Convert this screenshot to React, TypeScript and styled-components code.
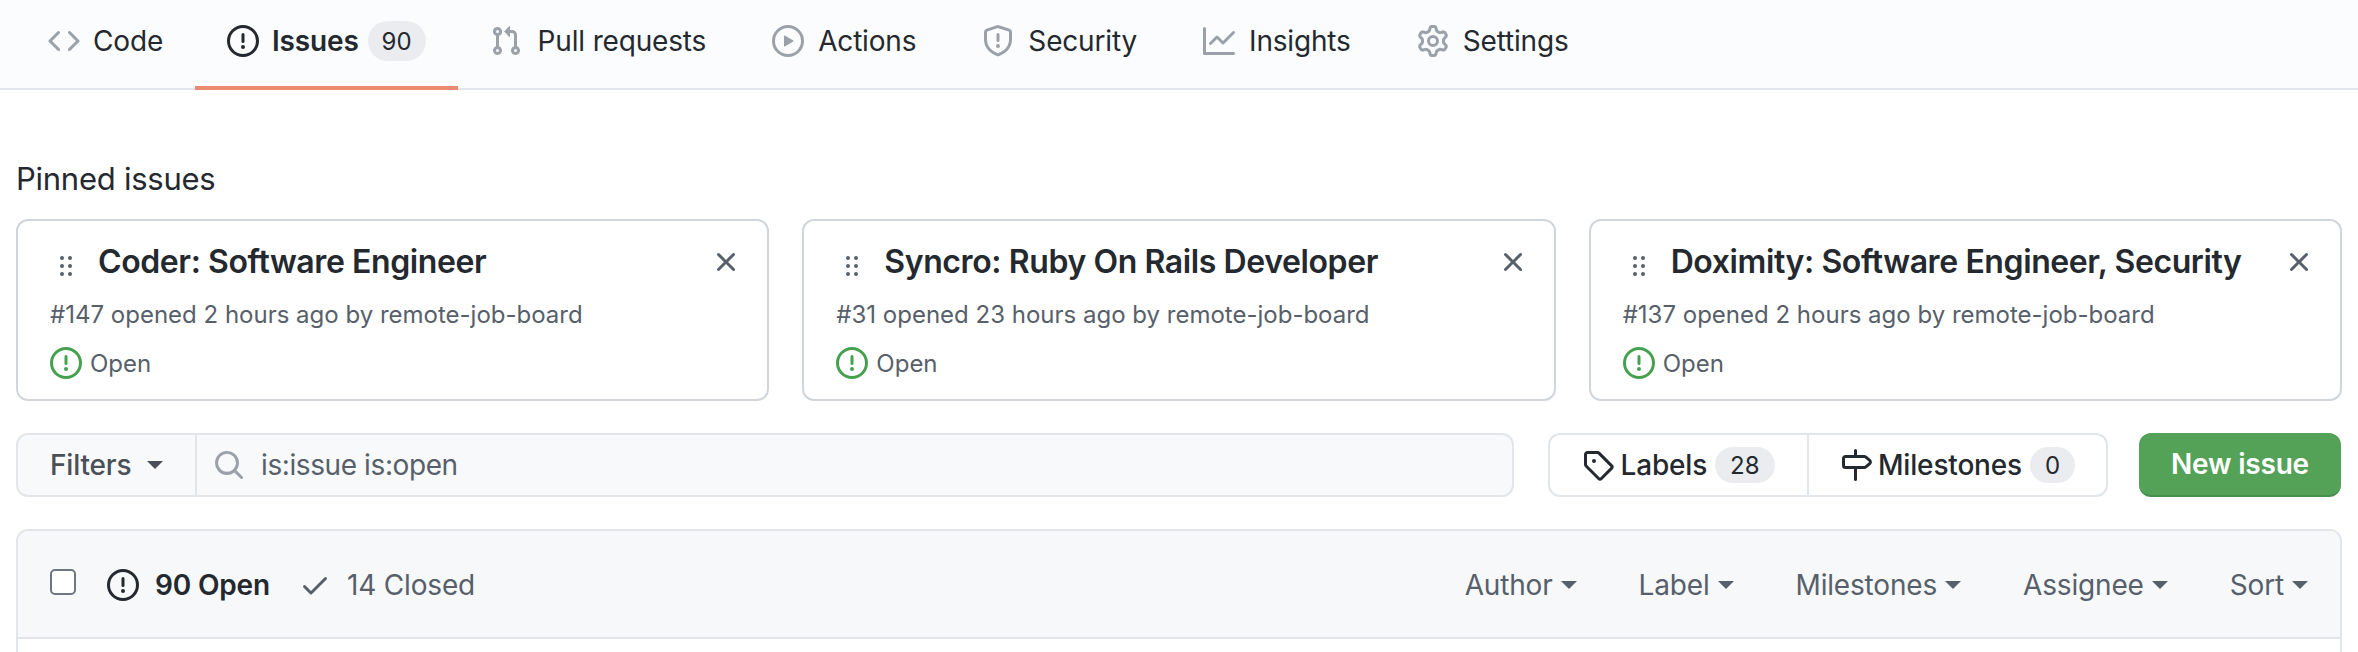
import styled, { createGlobalStyle } from "styled-components";

const GlobalStyle = createGlobalStyle`
  html, body {
    margin: 0;
    background: #ffffff;
    color: #24292f;
    font-family: Inter, "Liberation Sans", sans-serif;
    font-size: 28px;
    letter-spacing: -0.17px;
    overflow: hidden;
  }
  * { box-sizing: border-box; }
`;

const paths = {
  code: "m11.28 3.22 4.25 4.25a.75.75 0 0 1 0 1.06l-4.25 4.25a.749.749 0 0 1-1.275-.326.749.749 0 0 1 .215-.734L13.94 8l-3.72-3.72a.749.749 0 0 1 .326-1.275.749.749 0 0 1 .734.215Zm-6.56 0a.751.751 0 0 1 1.042.018.751.751 0 0 1 .018 1.042L2.06 8l3.72 3.72a.749.749 0 0 1-.326 1.275.749.749 0 0 1-.734-.215L.47 8.53a.75.75 0 0 1 0-1.06Z",
  issue: "M8 1.5a6.5 6.5 0 100 13 6.5 6.5 0 000-13zM0 8a8 8 0 1116 0A8 8 0 010 8zm9 3a1 1 0 11-2 0 1 1 0 012 0zm-.25-6.25a.75.75 0 00-1.5 0v3.5a.75.75 0 001.5 0v-3.5z",
  pull: "M1.5 3.25a2.25 2.25 0 1 1 3 2.122v5.256a2.251 2.251 0 1 1-1.5 0V5.372A2.25 2.25 0 0 1 1.5 3.25Zm5.677-.177L9.573.677A.25.25 0 0 1 10 .854V2.5h1A2.5 2.5 0 0 1 13.5 5v5.628a2.251 2.251 0 1 1-1.5 0V5a1 1 0 0 0-1-1h-1v1.646a.25.25 0 0 1-.427.177L7.177 3.427a.25.25 0 0 1 0-.354ZM3.75 2.5a.75.75 0 1 0 0 1.5.75.75 0 0 0 0-1.5Zm0 9.5a.75.75 0 1 0 0 1.5.75.75 0 0 0 0-1.5Zm8.25.75a.75.75 0 1 0 1.5 0 .75.75 0 0 0-1.5 0Z",
  play: "M8 0a8 8 0 1 1 0 16A8 8 0 0 1 8 0ZM1.5 8a6.5 6.5 0 1 0 13 0 6.5 6.5 0 0 0-13 0Zm4.879-2.773 4.264 2.559a.25.25 0 0 1 0 .428l-4.264 2.559A.25.25 0 0 1 6 10.559V5.442a.25.25 0 0 1 .379-.215Z",
  shield: "M7.467.133a1.748 1.748 0 0 1 1.066 0l5.25 1.68A1.75 1.75 0 0 1 15 3.48V7c0 1.566-.32 3.182-1.303 4.682-.983 1.498-2.585 2.813-5.032 3.855a1.697 1.697 0 0 1-1.33 0c-2.447-1.042-4.049-2.357-5.032-3.855C1.32 10.182 1 8.566 1 7V3.48a1.75 1.75 0 0 1 1.217-1.667Zm.61 1.429a.25.25 0 0 0-.153 0l-5.25 1.68a.25.25 0 0 0-.174.238V7c0 1.358.275 2.666 1.057 3.86.784 1.194 2.121 2.34 4.366 3.297a.196.196 0 0 0 .154 0c2.245-.956 3.582-2.104 4.366-3.298C13.225 9.666 13.5 8.36 13.5 7V3.48a.251.251 0 0 0-.174-.237l-5.25-1.68ZM8.75 4.75v3a.75.75 0 0 1-1.5 0v-3a.75.75 0 0 1 1.5 0ZM9 10.5a1 1 0 1 1-2 0 1 1 0 0 1 2 0Z",
  graph: "M1.5 1.75V13.5h13.75a.75.75 0 0 1 0 1.5H.75a.75.75 0 0 1-.75-.75V1.75a.75.75 0 0 1 1.5 0Zm14.28 2.53-5.25 5.25a.75.75 0 0 1-1.06 0L7 7.06 4.28 9.78a.751.751 0 0 1-1.042-.018.751.751 0 0 1-.018-1.042l3.25-3.25a.75.75 0 0 1 1.06 0L10 7.94l4.72-4.72a.751.751 0 0 1 1.042.018.751.751 0 0 1 .018 1.042Z",
  gear: "M8 0a8.2 8.2 0 0 1 .701.031C9.444.095 9.99.645 10.16 1.29l.288 1.107c.018.066.079.158.212.224.231.114.454.243.668.386.123.082.233.09.299.071l1.103-.303c.644-.176 1.392.021 1.82.63.27.385.506.792.704 1.218.315.675.111 1.422-.364 1.891l-.814.806c-.049.048-.098.147-.088.294.016.257.016.515 0 .772-.01.147.038.246.088.294l.814.806c.475.469.679 1.216.364 1.891a7.977 7.977 0 0 1-.704 1.217c-.428.61-1.176.807-1.82.63l-1.102-.302c-.067-.019-.177-.011-.3.071a5.909 5.909 0 0 1-.668.386c-.133.066-.194.158-.211.224l-.29 1.106c-.168.646-.715 1.196-1.458 1.26a8.006 8.006 0 0 1-1.402 0c-.743-.064-1.289-.614-1.458-1.26l-.289-1.106c-.018-.066-.079-.158-.212-.224a5.738 5.738 0 0 1-.668-.386c-.123-.082-.233-.09-.299-.071l-1.103.303c-.644.176-1.392-.021-1.82-.63a8.12 8.12 0 0 1-.704-1.218c-.315-.675-.111-1.422.363-1.891l.815-.806c.05-.048.098-.147.088-.294a6.214 6.214 0 0 1 0-.772c.01-.147-.038-.246-.088-.294l-.815-.806C.635 6.045.431 5.298.746 4.623a7.92 7.92 0 0 1 .704-1.217c.428-.61 1.176-.807 1.82-.63l1.102.302c.067.019.177.011.3-.071.214-.143.437-.272.668-.386.133-.066.194-.158.211-.224l.29-1.106C6.009.645 6.556.095 7.299.03 7.53.01 7.764 0 8 0Zm-.571 1.525c-.036.003-.108.036-.137.146l-.289 1.105c-.147.561-.549.967-.998 1.189-.173.086-.34.183-.5.29-.417.278-.97.423-1.529.27l-1.103-.303c-.109-.03-.175.016-.195.045-.22.312-.412.644-.573.99-.014.031-.021.11.059.19l.815.806c.411.406.562.957.53 1.456a4.709 4.709 0 0 0 0 .582c.032.499-.119 1.05-.53 1.456l-.815.806c-.081.08-.073.159-.059.19.162.346.353.677.573.989.02.03.085.076.195.046l1.102-.303c.56-.153 1.113-.008 1.53.27.161.107.328.204.501.29.447.222.85.629.997 1.189l.289 1.105c.029.109.101.143.137.146a6.6 6.6 0 0 0 1.142 0c.036-.003.108-.036.137-.146l.289-1.105c.147-.561.549-.967.998-1.189.173-.086.34-.183.5-.29.417-.278.97-.423 1.529-.27l1.103.303c.109.029.175-.016.195-.045.22-.313.411-.644.573-.99.014-.031.021-.11-.059-.19l-.815-.806c-.411-.406-.562-.957-.53-1.456a4.709 4.709 0 0 0 0-.582c-.032-.499.119-1.05.53-1.456l.815-.806c.081-.08.073-.159.059-.19a6.464 6.464 0 0 0-.573-.989c-.02-.03-.085-.076-.195-.046l-1.102.303c-.56.153-1.113.008-1.53-.27a4.44 4.44 0 0 0-.501-.29c-.447-.222-.85-.629-.997-1.189l-.289-1.105c-.029-.11-.101-.143-.137-.146a6.6 6.6 0 0 0-1.142 0ZM11 8a3 3 0 1 1-6 0 3 3 0 0 1 6 0ZM9.5 8a1.5 1.5 0 1 0-3.001.001A1.5 1.5 0 0 0 9.5 8Z",
  tag: "M1 7.775V2.75C1 1.784 1.784 1 2.75 1h5.025c.464 0 .91.184 1.238.513l6.25 6.25a1.75 1.75 0 0 1 0 2.474l-5.026 5.026a1.75 1.75 0 0 1-2.474 0l-6.25-6.25A1.752 1.752 0 0 1 1 7.775Zm1.5 0c0 .066.026.13.073.177l6.25 6.25a.25.25 0 0 0 .354 0l5.025-5.025a.25.25 0 0 0 0-.354l-6.25-6.25a.25.25 0 0 0-.177-.073H2.75a.25.25 0 0 0-.25.25ZM6 5a1 1 0 1 1 0 2 1 1 0 0 1 0-2Z",
  milestone: "M7.75 0a.75.75 0 0 1 .75.75V3h3.634c.414 0 .814.147 1.13.414l2.07 1.75a1.75 1.75 0 0 1 0 2.672l-2.07 1.75a1.75 1.75 0 0 1-1.13.414H8.5v5.25a.75.75 0 0 1-1.5 0V10H2.75A1.75 1.75 0 0 1 1 8.25v-3.5C1 3.784 1.784 3 2.75 3H7V.75A.75.75 0 0 1 7.75 0Zm4.384 8.5a.25.25 0 0 0 .161-.06l2.07-1.75a.248.248 0 0 0 0-.38l-2.07-1.75a.25.25 0 0 0-.161-.06H2.75a.25.25 0 0 0-.25.25v3.5c0 .138.112.25.25.25h9.384Z",
  check: "M13.78 4.22a.75.75 0 0 1 0 1.06l-7.25 7.25a.75.75 0 0 1-1.06 0L2.22 9.28a.751.751 0 0 1 .018-1.042.751.751 0 0 1 1.042-.018L6 10.94l6.72-6.72a.75.75 0 0 1 1.06 0Z",
  x: "M3.72 3.72a.75.75 0 0 1 1.06 0L8 6.94l3.22-3.22a.749.749 0 0 1 1.275.326.749.749 0 0 1-.215.734L9.06 8l3.22 3.22a.749.749 0 0 1-.326 1.275.749.749 0 0 1-.734-.215L8 9.06l-3.22 3.22a.751.751 0 0 1-1.042-.018.751.751 0 0 1-.018-1.042L6.94 8 3.72 4.78a.75.75 0 0 1 0-1.06Z",
  grabber: "M10 13a1 1 0 1 1 0-2 1 1 0 0 1 0 2Zm-4 0a1 1 0 1 1 0-2 1 1 0 0 1 0 2Zm1-5a1 1 0 1 1-2 0 1 1 0 0 1 2 0Zm3 1a1 1 0 1 1 0-2 1 1 0 0 1 0 2Zm1-5a1 1 0 1 1-2 0 1 1 0 0 1 2 0ZM6 5a1 1 0 1 1 0-2 1 1 0 0 1 0 2Z",
  search: "M10.68 11.74a6 6 0 0 1-7.922-8.982 6 6 0 0 1 8.982 7.922l3.04 3.04a.749.749 0 0 1-.326 1.275.749.749 0 0 1-.734-.215ZM11.5 7a4.499 4.499 0 1 0-8.997 0A4.499 4.499 0 0 0 11.5 7Z",
};

const Svg = styled.svg<{ $color?: string; $size?: number }>`
  flex: none;
  display: block;
  width: ${(p) => p.$size ?? 32}px;
  height: ${(p) => p.$size ?? 32}px;
  fill: ${(p) => p.$color ?? "currentColor"};
`;

const Octicon = ({ name, color, size }: { name: keyof typeof paths; color?: string; size?: number }) => (
  <Svg viewBox="0 0 16 16" $color={color} $size={size}>
    <path fillRule="evenodd" d={paths[name]} />
  </Svg>
);

const RepoNav = styled.nav`
  display: flex;
  height: 90px;
  padding-left: 16px;
  background: #fbfcfd;
  border-bottom: 2px solid #e2e5e9;
`;

const NavTab = styled.a<{ $active?: boolean; $gap?: number; $lead?: number }>`
  display: flex;
  align-items: center;
  gap: ${(p) => p.$gap ?? 13}px;
  height: 90px;
  padding: 0 32px 4px ${(p) => p.$lead ?? 32}px;
  font-weight: ${(p) => (p.$active ? 600 : 400)};
  color: #24292f;
  border-bottom: 4px solid ${(p) => (p.$active ? "#ec8a6f" : "transparent")};
`;

const Counter = styled.span`
  display: inline-flex;
  align-items: center;
  justify-content: center;
  min-width: 43px;
  height: 36px;
  padding: 0 15px;
  border-radius: 20px;
  background: #eaecef;
  font-size: 24px;
  font-weight: 400;
  letter-spacing: 0;
  color: #24292f;
`;

const TabCounter = styled(Counter)`
  margin-left: -4px;
  min-width: 58px;
  height: 40px;
  padding: 0 13px;
`;

const Main = styled.main`
  padding: 0 16px;
`;

const PinnedHeading = styled.h2`
  margin: 0;
  padding-top: 70px;
  height: 129px;
  font-size: 31px;
  font-weight: 400;
  letter-spacing: -0.25px;
  line-height: 38px;
`;

const PinnedGrid = styled.div`
  display: grid;
  grid-template-columns: repeat(3, 1fr);
  gap: 33px;
`;

const PinnedCard = styled.article`
  height: 182px;
  padding: 23px 25px 0 32px;
  border: 2px solid #d2d6db;
  border-radius: 12px;
  background: #ffffff;
`;

const CardTitleRow = styled.div`
  display: flex;
  align-items: center;
  gap: 16px;
  height: 36px;
`;

const GrabberSlot = styled.span`
  flex: none;
  margin-top: 8px;
`;

const CardTitle = styled.h3`
  flex: 1;
  margin: 0;
  font-size: 32px;
  font-weight: 600;
  letter-spacing: -0.4px;
  line-height: 36px;
  white-space: nowrap;
`;

const CardMeta = styled.div`
  margin-top: 17px;
  font-size: 24px;
  letter-spacing: 0;
  line-height: 36px;
  color: #57606a;
`;

const CardState = styled.div`
  display: flex;
  align-items: center;
  gap: 8px;
  margin-top: 14px;
  font-size: 24px;
  letter-spacing: 0;
  color: #57606a;
`;

const FilterRow = styled.div`
  display: flex;
  height: 64px;
  margin-top: 32px;
`;

const FilterButton = styled.div`
  display: flex;
  align-items: center;
  gap: 16px;
  width: 181px;
  padding-left: 32px;
  font-weight: 500;
  color: #4a5058;
  background: #f8f9fb;
  border: 2px solid #e2e5e9;
  border-radius: 12px 0 0 12px;
`;

const Caret = styled.span`
  flex: none;
  width: 0;
  height: 0;
  border-style: solid;
  border-width: 8px 8px 0;
  border-color: currentColor transparent transparent;
`;

const SearchBox = styled.div`
  display: flex;
  align-items: center;
  gap: 16px;
  width: 1319px;
  padding-left: 16px;
  margin-left: -2px;
  letter-spacing: -0.4px;
  color: #57606a;
  background: #f8f9fb;
  border: 2px solid #e2e5e9;
  border-radius: 0 12px 12px 0;
`;

const LinkGroup = styled.div`
  display: flex;
  width: 560px;
  margin-left: 34px;
  border: 2px solid #e2e5e9;
  border-radius: 12px;
  background: #ffffff;
`;

const GroupLink = styled.a<{ $width: number }>`
  display: flex;
  align-items: center;
  justify-content: center;
  gap: 6px;
  width: ${(p) => p.$width}px;
  font-weight: 500;
  & + & {
    border-left: 2px solid #e2e5e9;
  }
  ${Counter} {
    margin-left: 2px;
  }
`;

const NewIssueButton = styled.button`
  width: 202px;
  margin-left: 31px;
  padding: 0;
  border: 0;
  border-bottom: 2px solid #47904c;
  border-radius: 12px;
  background: #54a158;
  color: #ffffff;
  font: 600 28px Inter, "Liberation Sans", sans-serif;
  letter-spacing: -0.2px;
`;

const IssuesPanel = styled.section`
  height: 200px;
  margin-top: 32px;
  border: 2px solid #e2e5e9;
  border-radius: 12px 12px 0 0;
`;

const IssuesHeader = styled.header`
  display: flex;
  align-items: center;
  height: 108px;
  padding: 2px 32px 0;
  background: #f6f8fa;
  border-bottom: 2px solid #e2e5e9;
  border-radius: 10px 10px 0 0;
`;

const Checkbox = styled.span`
  flex: none;
  width: 26px;
  height: 26px;
  margin: -6px 31px 0 0;
  background: #ffffff;
  border: 2px solid #6e7781;
  border-radius: 5px;
`;

const StateLink = styled.a<{ $active?: boolean }>`
  display: flex;
  align-items: center;
  gap: 16px;
  margin-right: 29px;
  font-weight: ${(p) => (p.$active ? 600 : 400)};
  color: ${(p) => (p.$active ? "#24292f" : "#57606a")};
`;

const SortGroup = styled.div`
  display: flex;
  gap: 62px;
  margin-left: auto;
  color: #57606a;
`;

const SortItem = styled.a`
  display: flex;
  align-items: center;
  gap: 8px;
`;

const pinned = [
  { title: "Coder: Software Engineer", meta: "#147 opened 2 hours ago by remote-job-board" },
  { title: "Syncro: Ruby On Rails Developer", meta: "#31 opened 23 hours ago by remote-job-board" },
  { title: "Doximity: Software Engineer, Security", meta: "#137 opened 2 hours ago by remote-job-board" },
];

const tabs: { label: string; icon: keyof typeof paths; gap: number; lead: number }[] = [
  { label: "Pull requests", icon: "pull", gap: 16, lead: 32 },
  { label: "Actions", icon: "play", gap: 14, lead: 34 },
  { label: "Security", icon: "shield", gap: 14, lead: 34 },
  { label: "Insights", icon: "graph", gap: 14, lead: 34 },
  { label: "Settings", icon: "gear", gap: 14, lead: 34 },
];

export default function App() {
  return (
    <>
      <GlobalStyle />
      <RepoNav>
        <NavTab>
          <Octicon name="code" color="#9aa1a9" />
          Code
        </NavTab>
        <NavTab $active>
          <Octicon name="issue" />
          Issues
          <TabCounter>90</TabCounter>
        </NavTab>
        {tabs.map((t) => (
          <NavTab key={t.label} $gap={t.gap} $lead={t.lead}>
            <Octicon name={t.icon} color="#9aa1a9" />
            {t.label}
          </NavTab>
        ))}
      </RepoNav>
      <Main>
        <PinnedHeading>Pinned issues</PinnedHeading>
        <PinnedGrid>
          {pinned.map((card) => (
            <PinnedCard key={card.title}>
              <CardTitleRow>
                <GrabberSlot>
                  <Octicon name="grabber" color="#57606a" />
                </GrabberSlot>
                <CardTitle>{card.title}</CardTitle>
                <Octicon name="x" color="#57606a" />
              </CardTitleRow>
              <CardMeta>{card.meta}</CardMeta>
              <CardState>
                <Octicon name="issue" color="#46a14f" />
                Open
              </CardState>
            </PinnedCard>
          ))}
        </PinnedGrid>
        <FilterRow>
          <FilterButton>
            Filters
            <Caret />
          </FilterButton>
          <SearchBox>
            <Octicon name="search" color="#9aa1a9" />
            is:issue is:open
          </SearchBox>
          <LinkGroup>
            <GroupLink $width={258}>
              <Octicon name="tag" />
              Labels
              <Counter>28</Counter>
            </GroupLink>
            <GroupLink $width={300}>
              <Octicon name="milestone" />
              Milestones
              <Counter>0</Counter>
            </GroupLink>
          </LinkGroup>
          <NewIssueButton>New issue</NewIssueButton>
        </FilterRow>
        <IssuesPanel>
          <IssuesHeader>
            <Checkbox />
            <StateLink $active>
              <Octicon name="issue" />
              90 Open
            </StateLink>
            <StateLink>
              <Octicon name="check" color="#57606a" />
              14 Closed
            </StateLink>
            <SortGroup>
              {["Author", "Label", "Milestones", "Assignee", "Sort"].map((label) => (
                <SortItem key={label}>
                  {label}
                  <Caret />
                </SortItem>
              ))}
            </SortGroup>
          </IssuesHeader>
        </IssuesPanel>
      </Main>
    </>
  );
}
